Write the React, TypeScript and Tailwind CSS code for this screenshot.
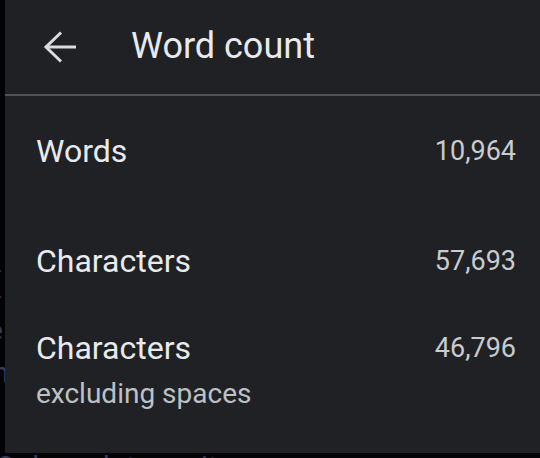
import React from 'react'

type Stat = {
  label: string
  value: string
  note?: string
}

const stats: Stat[] = [
  { label: 'Words', value: '10,964' },
  { label: 'Characters', value: '57,693' },
  { label: 'Characters', value: '46,796', note: 'excluding spaces' },
]

function BackArrow() {
  return (
    <svg width="34" height="34" viewBox="0 0 34 34" fill="none" className="shrink-0">
      <path d="M33 17H3" stroke="#dadce0" strokeWidth="3" />
      <path d="M18 2.5 3 17l15 14.5" stroke="#dadce0" strokeWidth="3" strokeLinejoin="miter" />
    </svg>
  )
}

function StatRow({ stat }: { stat: Stat }) {
  return (
    <div className="flex items-start justify-between">
      <div className="flex flex-col">
        <span className="text-[32px] leading-[40px] text-[#e8eaed]">{stat.label}</span>
        {stat.note && (
          <span className="mt-2 text-[28px] leading-[36px] text-[#bdc1c6]">{stat.note}</span>
        )}
      </div>
      <span className="text-[27px] leading-[40px] text-[#c9cbce]">{stat.value}</span>
    </div>
  )
}

export default function App() {
  return (
    <div
      className="relative w-[540px] h-[458px] overflow-hidden bg-[#030305]"
      style={{ fontFamily: 'Roboto, "Liberation Sans", sans-serif' }}
    >
      {/* page behind the dialog */}
      <div className="absolute inset-0 text-[28px] text-[#3a3b62]">
        <span className="absolute left-[-8px] top-[262px]">(</span>
        <span className="absolute left-[-12px] top-[310px]">e</span>
        <span className="absolute left-[-16px] top-[352px]">m</span>
        <span className="absolute left-[-4px] top-[446px] whitespace-nowrap tracking-wide">Only update sprite</span>
      </div>

      {/* dialog */}
      <div className="absolute left-[5px] top-0 w-[535px] h-[453px] bg-[#202124]">
        <div className="h-[96px] flex items-center border-b-2 border-[#505155] pl-[38px]">
          <BackArrow />
          <span className="ml-[54px] pb-[3px] text-[36px] leading-[48px] text-[#e8eaed]">Word count</span>
        </div>

        <div className="pl-[31px] pr-[24px] pt-[35px]">
          <StatRow stat={stats[0]} />
          <div className="mt-[70px]">
            <StatRow stat={stats[1]} />
          </div>
          <div className="mt-[47px]">
            <StatRow stat={stats[2]} />
          </div>
        </div>
      </div>
    </div>
  )
}
